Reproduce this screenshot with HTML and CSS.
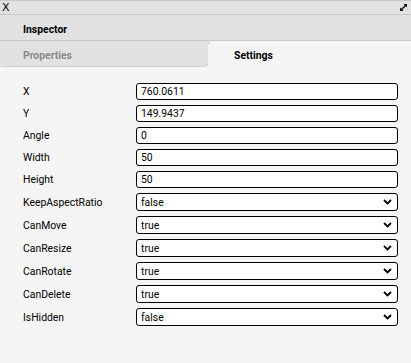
FILE: index.html
```html
<!DOCTYPE html>
<html lang="en">
<head>
    <meta charset="UTF-8">
    <meta name="viewport" content="width=device-width, initial-scale=1.0">
    <title>Inspector</title>
    <link rel="stylesheet" href="styles.css">
</head>
<body>
    <div class="topbar">
        <span class="close">X</span>
        <svg class="expand" width="9" height="9" viewBox="0 0 9 9">
            <path d="M1.5 7.5 L7.5 1.5" stroke="#111" stroke-width="1.4"/>
            <path d="M4.5 1 H8 V4.5 Z" fill="#111"/>
            <path d="M1 4.5 V8 H4.5 Z" fill="#111"/>
        </svg>
    </div>

    <div class="header">Inspector</div>

    <div class="tabs">
        <div class="tab">Properties</div>
        <div class="tab active">Settings</div>
    </div>

    <div class="content">
        <div class="row"><label>X</label><input type="text" value="760.0611"></div>
        <div class="row"><label>Y</label><input type="text" value="149.9437"></div>
        <div class="row"><label>Angle</label><input type="text" value="0"></div>
        <div class="row"><label>Width</label><input type="text" value="50"></div>
        <div class="row"><label>Height</label><input type="text" value="50"></div>
        <div class="row"><label>KeepAspectRatio</label>
            <select><option>false</option><option>true</option></select></div>
        <div class="row"><label>CanMove</label>
            <select><option>true</option><option>false</option></select></div>
        <div class="row"><label>CanResize</label>
            <select><option>true</option><option>false</option></select></div>
        <div class="row"><label>CanRotate</label>
            <select><option>true</option><option>false</option></select></div>
        <div class="row"><label>CanDelete</label>
            <select><option>true</option><option>false</option></select></div>
        <div class="row"><label>IsHidden</label>
            <select><option>false</option><option>true</option></select></div>
    </div>
</body>
</html>
```

FILE: styles.css
```css
:root {
    --bar-bg: #e2e2e2;
    --line: #c9c9c9;
    --panel-bg: #f5f5f5;
    --font-family: Roboto, "Liberation Sans", sans-serif;
    --font-size: 10.4px;
}

body {
    margin: 0;
    font-family: var(--font-family);
    font-size: var(--font-size);
    color: #000;
    background: var(--panel-bg);
    height: 363px;
    overflow: hidden;
}

.topbar {
    height: 13px;
    background: var(--bar-bg);
    border-top: 1px solid var(--line);
    border-bottom: 1px solid var(--line);
    display: flex;
    align-items: center;
    justify-content: space-between;
    padding: 0 3px 0 2px;
}

.close {
    font-family: "DejaVu Sans", sans-serif;
    font-size: 11px;
    line-height: 1;
}

.header {
    height: 20px;
    line-height: 20px;
    padding: 5px 0 0 23px;
    background: var(--bar-bg);
    border-bottom: 1px solid var(--line);
    font-weight: bold;
}

.tabs {
    display: flex;
    height: 25px;
    background: linear-gradient(var(--bar-bg) 50%, var(--panel-bg) 50%);
}

.tab {
    flex: 0 0 208px;
    line-height: 20px;
    padding: 5px 0 0 23px;
    box-sizing: border-box;
    background: var(--bar-bg);
    color: #8a8a8a;
    font-weight: bold;
    border-bottom-right-radius: 5px;
    box-shadow: 1px 1px 0 #d0d0d0;
}

.tab.active {
    flex: 1;
    padding-left: 26px;
    background: var(--panel-bg);
    color: #000;
    border-radius: 5px 0 0 0;
    box-shadow: none;
}

.content {
    padding: 17px 13px 0 23px;
    display: flex;
    flex-direction: column;
    gap: 5px;
}

.row {
    display: flex;
    align-items: center;
}

.row label {
    width: 113px;
}

input, select {
    width: 262px;
    box-sizing: border-box;
    margin: 0;
    border: 1px solid #000;
    border-radius: 3px;
    background-color: #fff;
    font-family: var(--font-family);
    font-size: var(--font-size);
    color: #000;
    outline: none;
}

input {
    height: 17px;
    padding: 0 4px;
}

select {
    height: 18px;
    padding: 0 4px;
    appearance: none;
    background-image: url("data:image/svg+xml,%3Csvg xmlns='http://www.w3.org/2000/svg' width='9' height='6' viewBox='0 0 9 6'%3E%3Cpath d='M1 1l3.5 3.5L8 1' fill='none' stroke='%23000' stroke-width='1.8'/%3E%3C/svg%3E");
    background-repeat: no-repeat;
    background-position: right 5px center;
}
```
